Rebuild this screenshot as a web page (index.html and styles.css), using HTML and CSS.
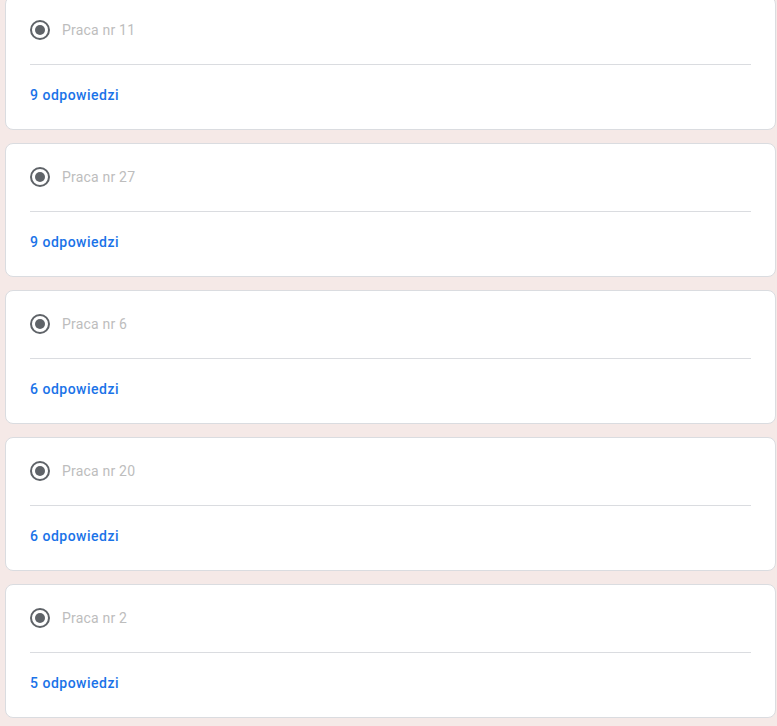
FILE: index.html
```html
<!DOCTYPE html>
<html lang="pl">
<head>
<meta charset="utf-8">
<link rel="stylesheet" href="styles.css">
</head>
<body>
<div class="list">
  <div class="card">
    <div class="row"><span class="radio"></span><span class="label">Praca nr 11</span></div>
    <div class="divider"></div>
    <div class="link">9 odpowiedzi</div>
  </div>
  <div class="card">
    <div class="row"><span class="radio"></span><span class="label">Praca nr 27</span></div>
    <div class="divider"></div>
    <div class="link">9 odpowiedzi</div>
  </div>
  <div class="card">
    <div class="row"><span class="radio"></span><span class="label">Praca nr 6</span></div>
    <div class="divider"></div>
    <div class="link">6 odpowiedzi</div>
  </div>
  <div class="card">
    <div class="row"><span class="radio"></span><span class="label">Praca nr 20</span></div>
    <div class="divider"></div>
    <div class="link">6 odpowiedzi</div>
  </div>
  <div class="card">
    <div class="row"><span class="radio"></span><span class="label">Praca nr 2</span></div>
    <div class="divider"></div>
    <div class="link">5 odpowiedzi</div>
  </div>
</div>
</body>
</html>
```

FILE: styles.css
```css
html, body {
  margin: 0;
  padding: 0;
  background: #f5e9e7;
  font-family: Roboto, "Liberation Sans", sans-serif;
}
.list {
  display: flex;
  flex-direction: column;
  gap: 13px;
  margin: -4px 1px 0 5px;
}
.card {
  background: #fff;
  border: 1px solid #dadce0;
  border-radius: 8px;
  padding: 23px 24px 24px;
  height: 134px;
  box-sizing: border-box;
}
.row {
  display: flex;
  align-items: center;
  height: 20px;
}
.radio {
  width: 20px;
  height: 20px;
  box-sizing: border-box;
  border: 2px solid #5f6368;
  border-radius: 50%;
  display: flex;
  align-items: center;
  justify-content: center;
}
.radio::after {
  content: "";
  width: 10px;
  height: 10px;
  border-radius: 50%;
  background: #5f6368;
}
.label {
  margin-left: 12px;
  font-size: 14px;
  color: #bdbdbd;
  letter-spacing: 0.2px;
}
.divider {
  height: 1px;
  background: #dadce0;
  margin-top: 24px;
}
.link {
  margin-top: 20px;
  height: 20px;
  line-height: 20px;
  font-size: 14px;
  font-weight: 500;
  color: #1a73e8;
  letter-spacing: 0.5px;
}
```
